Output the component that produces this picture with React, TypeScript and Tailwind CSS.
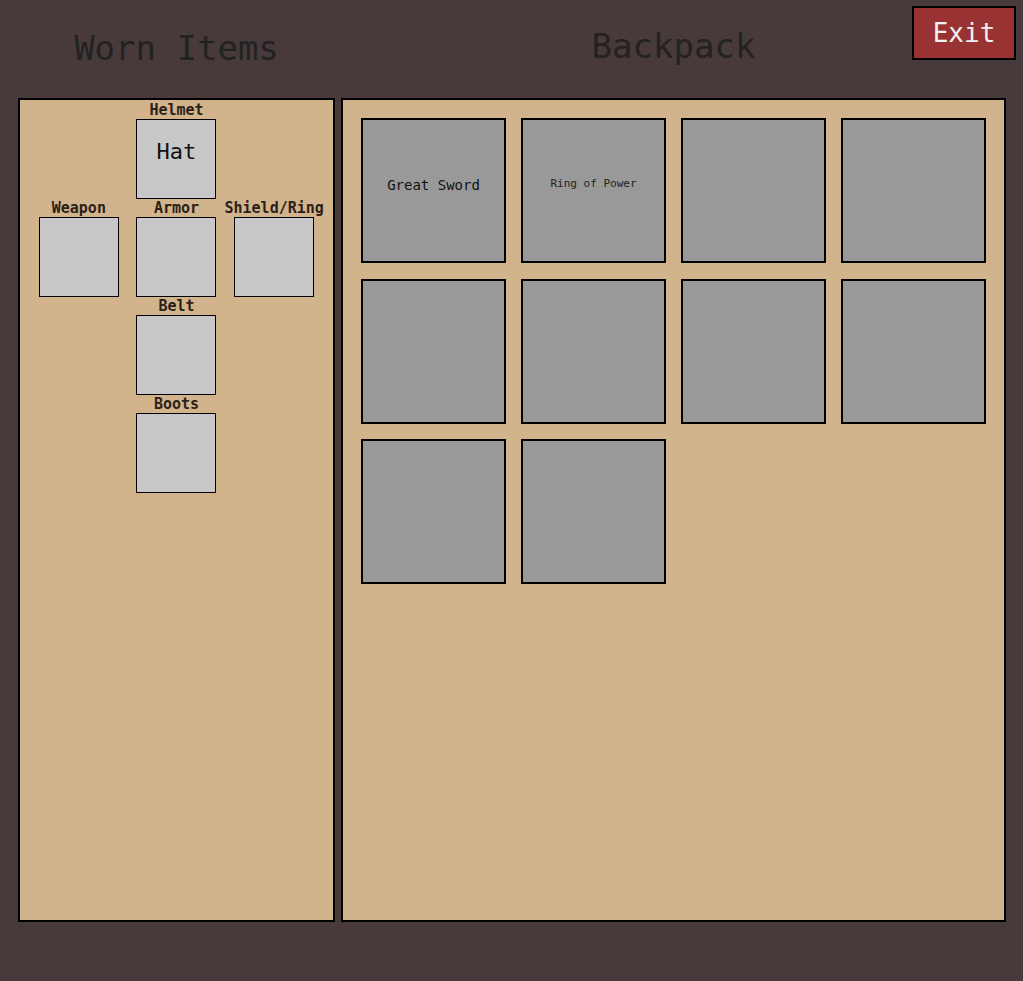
import React from 'react'

type WornSlot = { id: string; label: string; item?: string; col: string }

const wornRows: WornSlot[][] = [
  [{ id: 'helmet', label: 'Helmet', item: 'Hat', col: 'col-start-2' }],
  [
    { id: 'weapon', label: 'Weapon', col: 'col-start-1' },
    { id: 'armor', label: 'Armor', col: 'col-start-2' },
    { id: 'shield', label: 'Shield/Ring', col: 'col-start-3' },
  ],
  [{ id: 'belt', label: 'Belt', col: 'col-start-2' }],
  [{ id: 'boots', label: 'Boots', col: 'col-start-2' }],
]

const backpack: { name?: string; small?: boolean }[] = [
  { name: 'Great Sword' },
  { name: 'Ring of Power', small: true },
  {},
  {},
  {},
  {},
  {},
  {},
  {},
  {},
]

const font = "font-['DejaVu_Sans_Mono','Liberation_Mono',monospace]"

const Slot: React.FC<{ slot: WornSlot }> = ({ slot }) => (
  <div className={`${slot.col} flex flex-col items-center`}>
    <span className="h-[18px] text-[15px] leading-[18px] font-bold text-[#2b2118] whitespace-nowrap">
      {slot.label}
    </span>
    <div className="w-[80px] h-[80px] bg-[#c8c8c8] border border-black flex items-center justify-center">
      {slot.item && <span className="text-[22px] text-[#111] -mt-4">{slot.item}</span>}
    </div>
  </div>
)

export default function App() {
  return (
    <div className={`${font} relative min-h-[981px] w-full bg-[#483a3a]`}>
      <button className="absolute top-[6px] right-[7px] w-[104px] h-[54px] bg-[#993333] border-2 border-black text-[26px] text-[#f0f0f0]">
        Exit
      </button>

      <div className="flex gap-[6px] pl-[18px]">
        <div className="w-[317px] shrink-0 h-[98px] flex items-center justify-center">
          <h2 className="text-[34px] text-[#222] -mt-0.5">Worn Items</h2>
        </div>
        <div className="w-[665px] shrink-0 h-[98px] flex items-center justify-center">
          <h2 className="text-[34px] text-[#222] -mt-1.5">Backpack</h2>
        </div>
      </div>

      <div className="flex gap-[6px] pl-[18px]">
        <section className="w-[317px] shrink-0 h-[824px] bg-[#d2b48c] border-2 border-black px-[10px] pt-px">
          {wornRows.map((row, i) => (
            <div key={i} className="grid grid-cols-3">
              {row.map((s) => (
                <Slot key={s.id} slot={s} />
              ))}
            </div>
          ))}
        </section>

        <section className="w-[665px] shrink-0 h-[824px] bg-[#d2b48c] border-2 border-black pl-[18px] pt-[18px]">
          <div className="grid grid-cols-[repeat(4,145px)] gap-x-[15px] gap-y-[15.5px]">
            {backpack.map((b, i) => (
              <div
                key={i}
                className="w-[145px] h-[145px] bg-[#999999] border-2 border-black flex items-center justify-center"
              >
                {b.name && (
                  <span className={b.small ? 'text-[11px] text-[#222] -mt-3' : 'text-[14px] text-[#111] -mt-2.5'}>
                    {b.name}
                  </span>
                )}
              </div>
            ))}
          </div>
        </section>
      </div>
    </div>
  )
}
